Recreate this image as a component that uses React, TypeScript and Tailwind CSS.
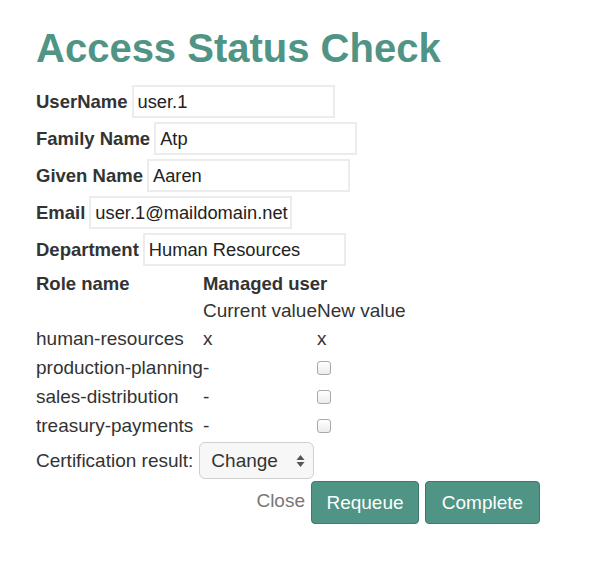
import React from "react";

const font = { fontFamily: '"Liberation Sans", Arial, Helvetica, sans-serif' };

function Field({ label, value }: { label: string; value: string }) {
  return (
    <div className="flex items-center h-[33px] mb-[4px]">
      <span className="font-bold text-[18.5px] mr-[4px]">{label}</span>
      <div className="w-[203px] h-[33px] border-2 border-[#ececec] bg-white flex items-center pl-[4px] pr-0 text-[18.3px] text-[#222] whitespace-nowrap">
        {value}
      </div>
    </div>
  );
}

function Check() {
  return (
    <div className="w-[14px] h-[14px] rounded-[3px] border border-[#a9a9a9] bg-gradient-to-b from-white to-[#ececec]" />
  );
}

export default function App() {
  const roles: { name: string; cur: string; nv: "x" | "box" }[] = [
    { name: "human-resources", cur: "x", nv: "x" },
    { name: "production-planning", cur: "-", nv: "box" },
    { name: "sales-distribution", cur: "-", nv: "box" },
    { name: "treasury-payments", cur: "-", nv: "box" },
  ];
  return (
    <div style={font} className="w-[596px] h-[585px] bg-white text-[#333] text-[19px] leading-[26px] pl-[36px]">
      <h1 className="text-[40px] leading-[44px] font-bold text-[#4f9484] pt-[26px] pb-[15px]">Access Status Check</h1>
      <Field label="UserName" value="user.1" />
      <Field label="Family Name" value="Atp" />
      <Field label="Given Name" value="Aaren" />
      <Field label="Email" value="user.1@maildomain.net" />
      <Field label="Department" value="Human Resources" />
      <table className="border-collapse">
        <tbody>
          <tr className="h-[27px]">
            <td className="p-0 font-bold text-[18.5px]">Role name</td>
            <td className="p-0 font-bold text-[18.5px]" colSpan={2}>Managed user</td>
          </tr>
          <tr className="h-[27px]">
            <td className="p-0"></td>
            <td className="p-0">Current value</td>
            <td className="p-0">New value</td>
          </tr>
          {roles.map((r) => (
            <tr key={r.name} className="h-[29px]">
              <td className="p-0">{r.name}</td>
              <td className="p-0">{r.cur}</td>
              <td className="p-0">{r.nv === "x" ? "x" : <Check />}</td>
            </tr>
          ))}
        </tbody>
      </table>
      <div className="flex items-center mt-[2px]">
        <span className="mr-[6px]">Certification result:</span>
        <div className="w-[115px] h-[37px] rounded-[6px] border border-[#cfcfcf] bg-[#f7f7f7] flex items-center justify-between pl-[11px] pr-[8px] text-[#333]">
          <span>Change</span>
          <svg width="9" height="14" viewBox="0 0 9 14">
            <path d="M4.5 1 L8.5 6 H0.5 Z" fill="#555" />
            <path d="M4.5 13 L8.5 8 H0.5 Z" fill="#555" />
          </svg>
        </div>
      </div>
      <div className="flex items-center justify-end w-[504px] mt-[2px]">
        <span className="text-[#777] mr-[6px] mt-[-4px]">Close</span>
        <button className="h-[43px] w-[108px] rounded-[4px] bg-[#4f9484] border border-[#3f7a6c] text-white mr-[6px]">Requeue</button>
        <button className="h-[43px] w-[115px] rounded-[4px] bg-[#4f9484] border border-[#3f7a6c] text-white">Complete</button>
      </div>
    </div>
  );
}
